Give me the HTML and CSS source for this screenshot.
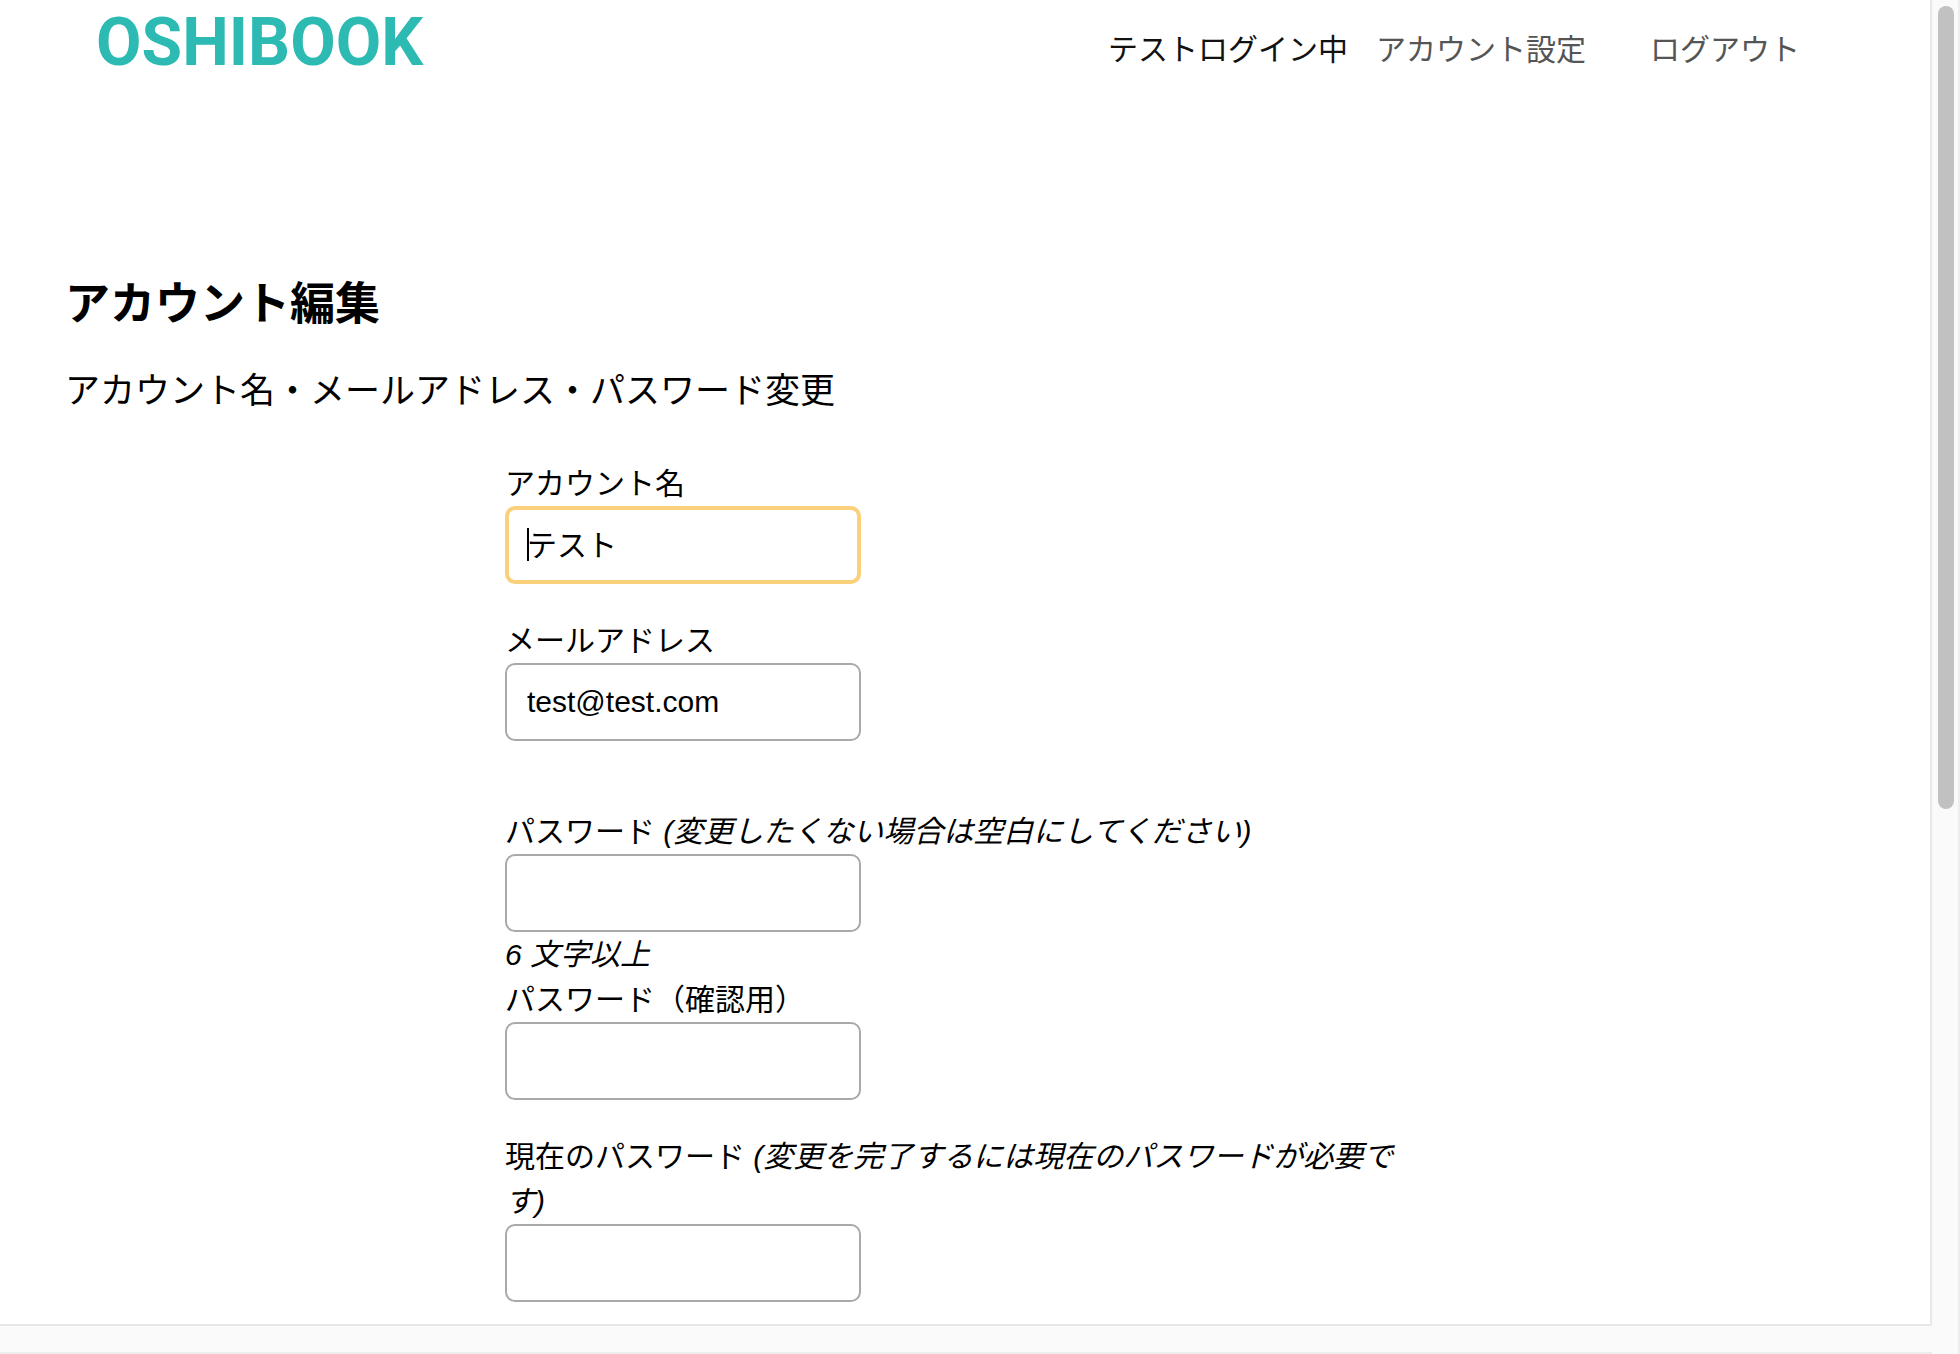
FILE: index.html
```html
<!DOCTYPE html>
<html lang="ja">
<head>
<meta charset="utf-8">
<meta name="viewport" content="width=device-width, initial-scale=1">
<title>アカウント編集 | OSHIBOOK</title>
<link rel="stylesheet" href="styles.css">
</head>
<body>
<div class="frame">
  <div class="page">
    <header class="header">
      <a class="logo" href="#">OSHIBOOK</a>
      <nav class="nav">
        <span class="nav-user">テストログイン中</span>
        <a class="nav-link" href="#">アカウント設定</a>
        <a class="nav-link" href="#">ログアウト</a>
      </nav>
    </header>
    <main class="main">
      <h1 class="title">アカウント編集</h1>
      <h2 class="subtitle">アカウント名・メールアドレス・パスワード変更</h2>
      <form class="form">
        <div class="field">
          <label for="name">アカウント名</label>
          <div class="control">
            <input class="input input-active" id="name" type="text" value="テスト">
            <span class="caret"></span>
          </div>
        </div>
        <div class="field field-wide">
          <label for="email">メールアドレス</label>
          <input class="input" id="email" type="email" value="test@test.com">
        </div>
        <div class="field field-joined">
          <label for="password">パスワード <em>(変更したくない場合は空白にしてください)</em></label>
          <input class="input" id="password" type="password">
          <em>6 文字以上</em>
        </div>
        <div class="field">
          <label for="confirm">パスワード（確認用）</label>
          <input class="input" id="confirm" type="password">
        </div>
        <div class="field">
          <label for="current">現在のパスワード <em>(変更を完了するには現在のパスワードが必要です)</em></label>
          <input class="input" id="current" type="password">
        </div>
      </form>
    </main>
  </div>
  <div class="track-y"><div class="thumb"></div></div>
  <div class="track-x"></div>
</div>
</body>
</html>
```
FILE: styles.css
```css
* {
  box-sizing: border-box;
}

body {
  margin: 0;
  background: #fff;
  color: #000;
  font-family: "Liberation Sans", "Noto Sans CJK JP", sans-serif;
  font-size: 30px;
  line-height: 45px;
}

.frame {
  display: grid;
  grid-template-columns: minmax(0, 1fr) 28px;
  grid-template-rows: minmax(0, 1fr) 30px;
  height: 100vh;
  border-right: 2px solid #ededed;
}

.page {
  overflow: hidden;
}

.track-y {
  padding: 6px 4px 6px 6px;
  border-left: 2px solid #e8e8e8;
  background: #fafafa;
}

.thumb {
  width: 16px;
  height: 61.2%;
  border-radius: 8px;
  background: #c1c1c1;
}

.track-x {
  grid-column: 1 / -1;
  margin-right: 26px;
  border-top: 2px solid #e8e8e8;
  border-bottom: 2px solid #ededed;
  background: #fafafa;
  box-shadow: 26px 0 0 #fafafa;
}

.header {
  display: flex;
  justify-content: space-between;
  align-items: flex-start;
  height: 96px;
  padding: 0 130px 0 96px;
}

.logo {
  color: #2cbab2;
  font-family: Roboto, "Liberation Sans", sans-serif;
  font-size: 66px;
  font-weight: bold;
  line-height: 86px;
  text-decoration: none;
}

.nav {
  display: flex;
  padding-top: 27px;
}

.nav-user {
  margin-right: 28px;
  color: #111;
}

.nav-link {
  color: #555;
  text-decoration: none;
}

.nav-link + .nav-link {
  margin-left: 64px;
}

.main {
  padding: 175px 65px 0;
}

.title {
  margin: 0;
  font-size: 45px;
  line-height: 68px;
}

.subtitle {
  margin: 26px 0 44px;
  font-size: 35px;
  font-weight: normal;
  line-height: 52px;
}

.form {
  max-width: 920px;
  margin: 0 auto;
  padding-right: 20px;
}

.field {
  display: flex;
  flex-direction: column;
  align-items: flex-start;
  margin-bottom: 34px;
}

.field-wide {
  margin-bottom: 68px;
}

.field-joined {
  margin-bottom: 0;
}

.control {
  position: relative;
}

.input {
  display: block;
  width: 356px;
  height: 78px;
  padding: 0 20px;
  border: 2px solid #a9a9a9;
  border-radius: 10px;
  outline: none;
  background: #fff;
  color: #000;
  font: inherit;
}

.input-active {
  padding: 0 18px 4px;
  border: 4px solid #fad07a;
}

.caret {
  position: absolute;
  top: 22px;
  left: 22px;
  width: 2px;
  height: 33px;
  background: #000;
}
```
